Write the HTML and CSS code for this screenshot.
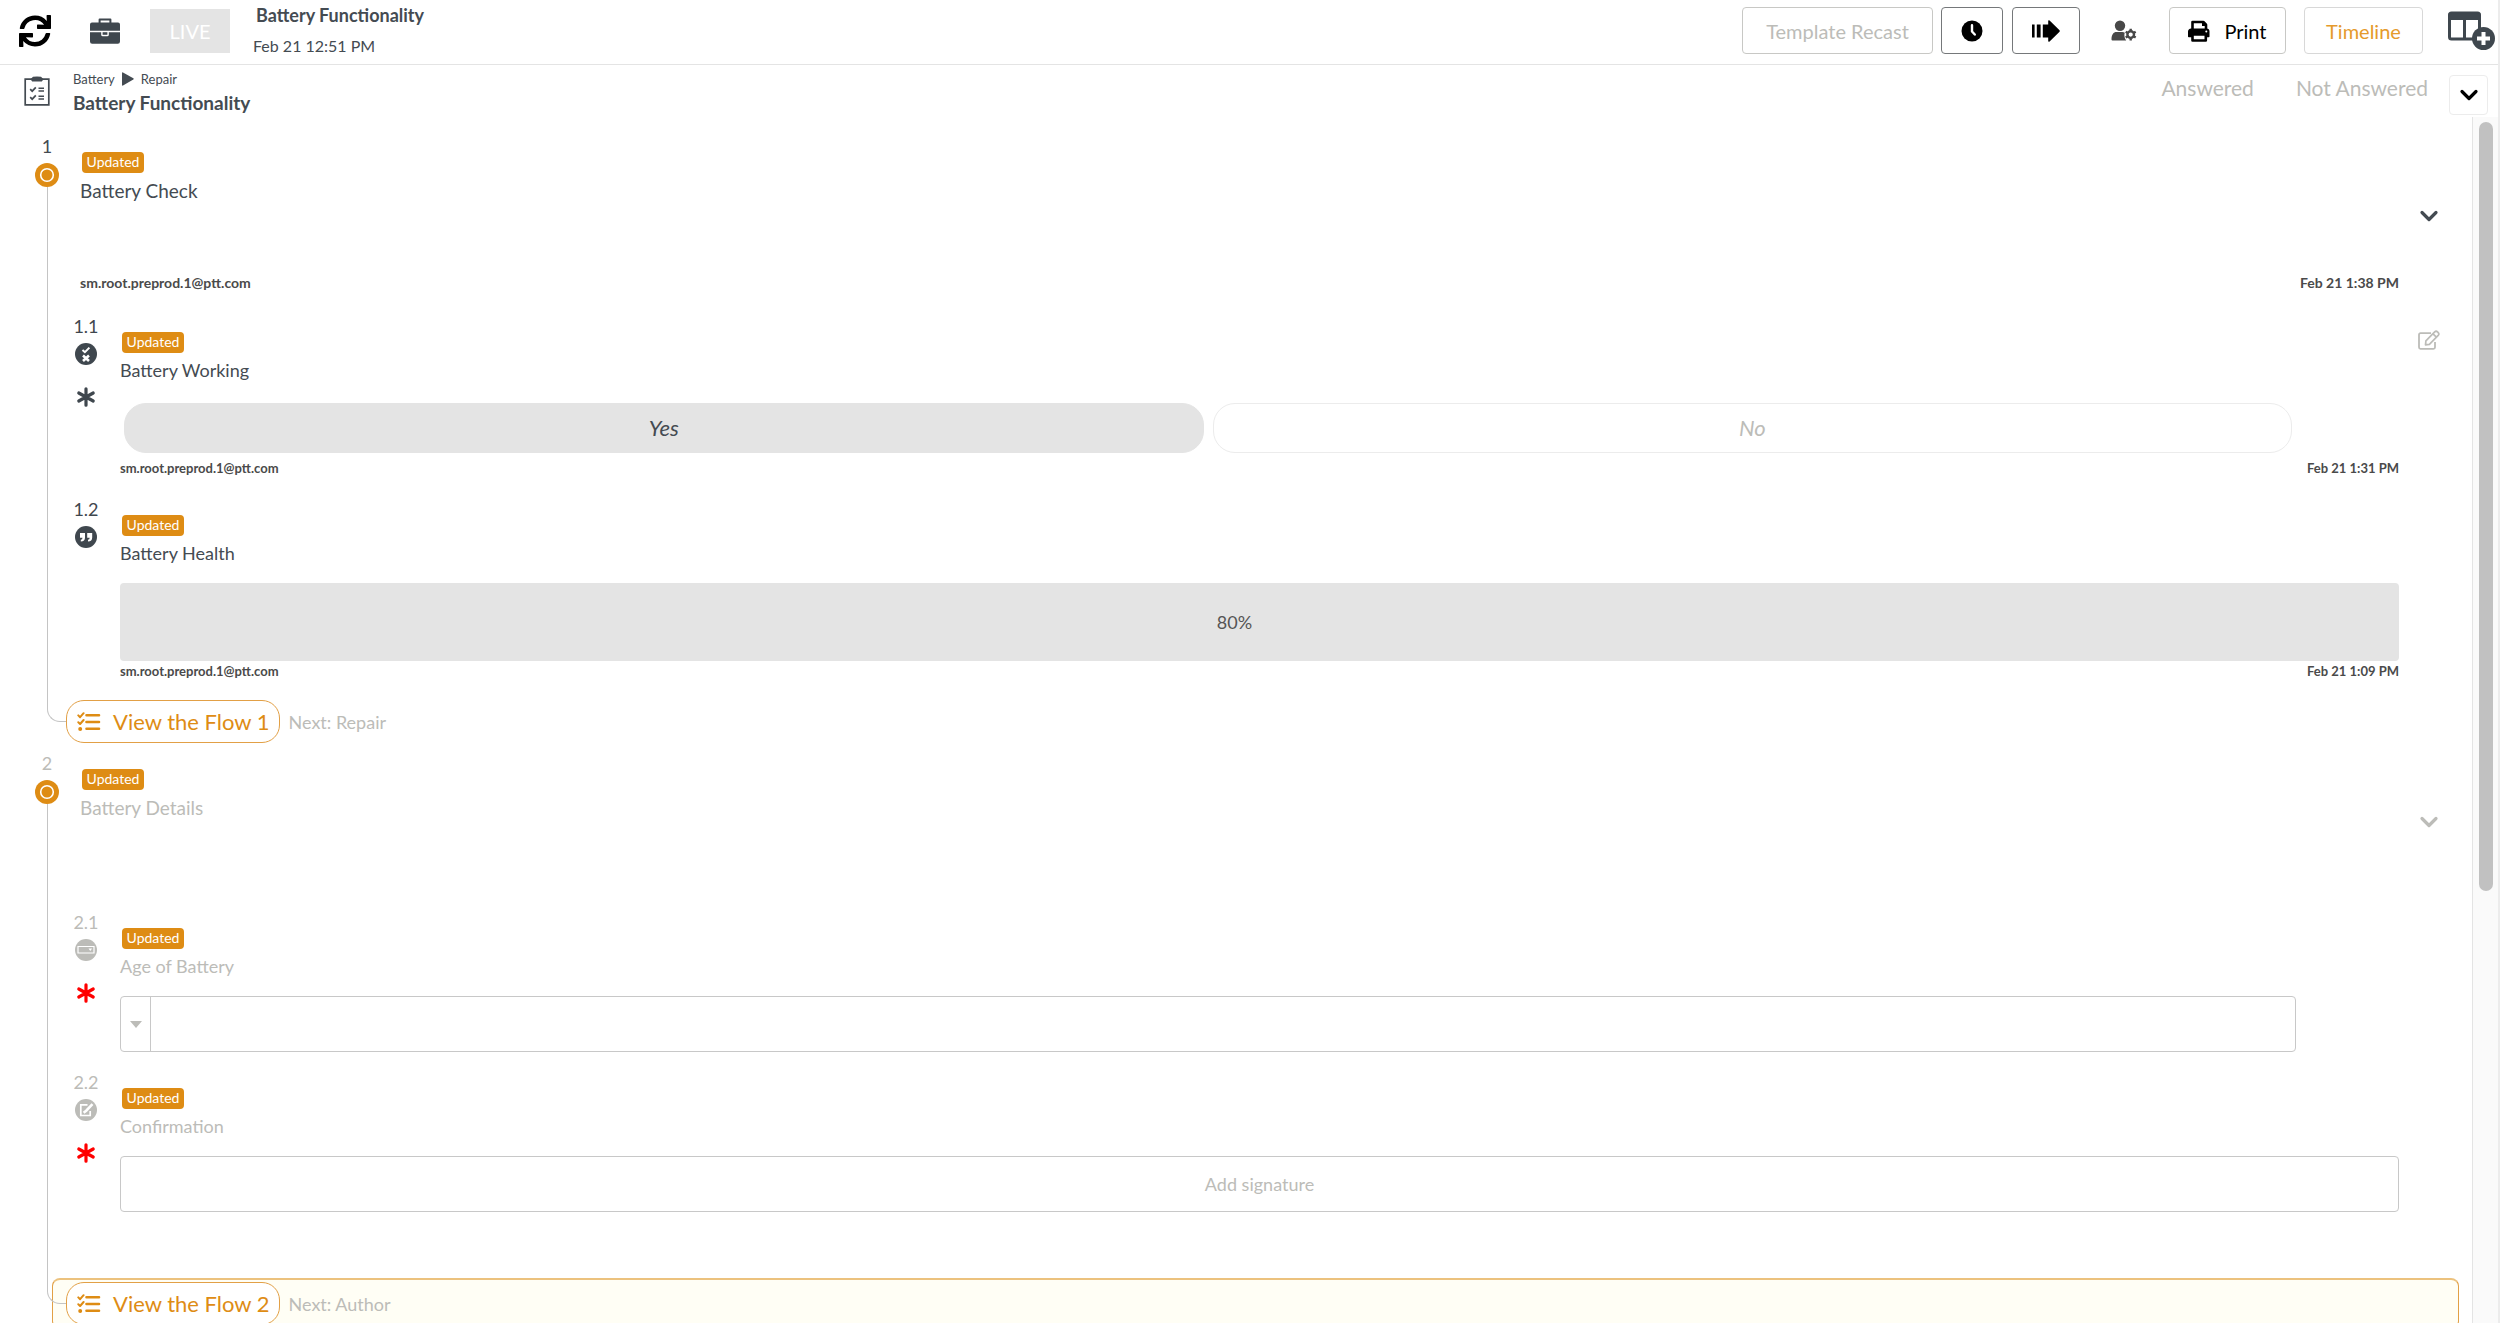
FILE: index.html
```html
<!DOCTYPE html>
<html lang="en">
<head>
    <meta charset="UTF-8">
    <meta name="viewport" content="width=device-width, initial-scale=1.0">
    <title>Battery Functionality</title>
    <link rel="stylesheet" href="styles.css">
</head>
<body>
    <!-- shared icons -->
    <svg class="sprite" aria-hidden="true">
        <symbol id="i-chevron" viewBox="0 0 20 20">
            <path d="M3 6.5l7 7 7-7" fill="none" stroke="currentColor" stroke-width="3.2" stroke-linecap="round" stroke-linejoin="round"/>
        </symbol>
        <symbol id="i-asterisk" viewBox="0 0 20 20">
            <path d="M10 1.800v16.400M2.800 6l14.400 8M17.200 6L2.800 14" fill="none" stroke="currentColor" stroke-width="3.2" stroke-linecap="round"/>
        </symbol>
        <symbol id="i-target" viewBox="0 0 24 24">
            <circle cx="12" cy="12" r="12" fill="currentColor"/>
            <circle cx="12" cy="12" r="6.3" fill="none" stroke="#fff" stroke-width="1.6"/>
        </symbol>
        <symbol id="i-flow" viewBox="0 0 24 20">
            <path d="M9.5 3.2h12.5M9.5 10h12.5M9.5 16.8h12.5" fill="none" stroke="currentColor" stroke-width="2.6" stroke-linecap="round"/>
            <path d="M1.3 3.4l1.8 1.8L6.6 1.2M1.3 10.2l1.8 1.8L6.6 8" fill="none" stroke="currentColor" stroke-width="2" stroke-linecap="round" stroke-linejoin="round"/>
            <circle cx="3.2" cy="16.9" r="2" fill="currentColor"/>
        </symbol>
    </svg>

    <header class="topbar">
        <button class="icon-btn refresh" type="button" aria-label="Refresh">
            <svg viewBox="0 0 512 512" width="32" height="32"><path fill="currentColor" d="M440.65 12.57l4 82.77A247.16 247.16 0 0 0 255.83 8C134.73 8 33.91 94.92 12.29 209.82A12 12 0 0 0 24.09 224h49.05a12 12 0 0 0 11.67-9.26 175.91 175.91 0 0 1 317-56.94l-101.46-4.86a12 12 0 0 0-12.57 12v47.41a12 12 0 0 0 12 12H500a12 12 0 0 0 12-12V12a12 12 0 0 0-12-12h-47.37a12 12 0 0 0-11.98 12.57zM255.83 432a175.61 175.61 0 0 1-146-77.8l101.8 4.87a12 12 0 0 0 12.57-12v-47.4a12 12 0 0 0-12-12H12a12 12 0 0 0-12 12V500a12 12 0 0 0 12 12h47.35a12 12 0 0 0 12-12.6l-4.15-82.57A247.17 247.17 0 0 0 255.83 504c121.11 0 221.93-86.92 243.55-201.82a12 12 0 0 0-11.8-14.18h-49.05a12 12 0 0 0-11.67 9.26A175.86 175.86 0 0 1 255.83 432z"/></svg>
        </button>
        <button class="icon-btn briefcase" type="button" aria-label="Jobs">
            <svg viewBox="0 0 30 26" width="30" height="26">
                <path d="M9.6 5V1.6h10.8V5" fill="none" stroke="currentColor" stroke-width="2" stroke-linejoin="round"/>
                <path fill="currentColor" d="M2 4.6h26a2 2 0 0 1 2 2v6.2H0V6.600a2 2 0 0 1 2-2zM0 14.200h11.200v2.600a1.500 1.500 0 0 0 1.500 1.500h4.600a1.500 1.500 0 0 0 1.500-1.500v-2.600H30v9.300a2.200 2.200 0 0 1-2.200 2.200H2.200A2.200 2.200 0 0 1 0 23.500z"/>
                <path fill="currentColor" d="M12.600 14.200h4.800v2.600h-4.800z"/>
            </svg>
        </button>
        <button class="live" type="button" disabled>LIVE</button>
        <div class="job">
            <div class="job-name">Battery Functionality</div>
            <div class="job-date">Feb 21 12:51 PM</div>
        </div>
        <div class="actions">
            <button class="btn recast" type="button" disabled>Template Recast</button>
            <button class="btn dark" type="button" aria-label="History">
                <svg viewBox="0 0 22 22" width="22" height="22"><circle cx="11" cy="11" r="10.500" fill="currentColor"/><path d="M11 5.200v6.300l2.800 3" fill="none" stroke="#fff" stroke-width="2.400" stroke-linecap="round" stroke-linejoin="round"/></svg>
            </button>
            <button class="btn dark" type="button" aria-label="Move forward">
                <svg viewBox="0 0 28 22" width="28" height="22"><path fill="currentColor" d="M0 4.500h2.600v13H0zM4.800 4.500h3.800v13H4.800zM10.800 4.500h5.400V1.200q0-1.600 1.400-.6L27.300 10q1 1 0 2l-9.700 9.400q-1.400 1-1.400-.6v-3.300h-5.400z"/></svg>
            </button>
            <button class="icon-btn user" type="button" aria-label="User settings">
                <svg viewBox="0 0 26 22" width="26" height="22">
                    <circle cx="9" cy="5.800" r="5.200" fill="currentColor"/>
                    <path fill="currentColor" d="M0.500 19.500c0-4.800 2-7.400 5-7.400h5.800c1 0 1.800.2 2.500.6-.8 1.800-.6 5 1.400 7.800H1.500a1 1 0 0 1-1-1z"/>
                    <circle cx="19.700" cy="14.600" r="3.300" fill="none" stroke="currentColor" stroke-width="2.400"/>
                    <path d="M19.700 8.800v2M19.700 18.400v2M14.700 11.700l1.700 1M23 16.500l1.700 1M14.700 17.500l1.700-1M23 12.700l1.700-1" stroke="currentColor" stroke-width="2.400"/>
                </svg>
            </button>
            <button class="btn print" type="button">
                <svg viewBox="0 0 22 22" width="22" height="22">
                    <path d="M4.500 9V2h10.800L18 4.700V9" fill="none" stroke="currentColor" stroke-width="2.600" stroke-linejoin="round"/>
                    <path fill="currentColor" d="M14 1v5h5V4.500L15.500 1zM3.500 8.500h15A3 3 0 0 1 21.500 11.500v5a.8.8 0 0 1-.8.8H.8a.8.8 0 0 1-.8-.8v-5A3 3 0 0 1 3.500 8.500z"/>
                    <path d="M4.500 14.500h13.300v6H4.500z" fill="#fff" stroke="currentColor" stroke-width="2.600" stroke-linejoin="round"/>
                    <circle cx="18.300" cy="11.600" r="1" fill="#fff"/>
                </svg>
                Print
            </button>
            <button class="btn timeline" type="button">Timeline</button>
            <button class="icon-btn columns" type="button" aria-label="Add column">
                <svg viewBox="0 0 48 40" width="48" height="40">
                    <rect x="1.500" y="2" width="30" height="26" rx="2" fill="#fff" stroke="currentColor" stroke-width="3"/>
                    <path d="M0.500 2.500h32v6.500h-32zM15 8h3v20h-3z" fill="currentColor"/>
                    <circle cx="35.500" cy="27.500" r="11.500" fill="currentColor"/>
                    <path d="M35.500 21v13M29 27.500h13" stroke="#fff" stroke-width="4"/>
                </svg>
            </button>
        </div>
    </header>

    <div class="subbar">
        <svg class="clipboard" viewBox="0 0 26 30" width="26" height="30" aria-hidden="true">
            <path d="M1.200 3.200h23.600v25.600H1.200z" fill="none" stroke="currentColor" stroke-width="1.700"/>
            <path fill="currentColor" d="M6.500 3.200L9 .8Q13 .2 17 .8l2.500 2.400-1.700 2.400H8.200z"/>
            <path d="M6.200 13.200l2 2 3.600-3.800M6.200 21.200l2 2 3.600-3.800" fill="none" stroke="currentColor" stroke-width="1.700"/>
            <path d="M14.500 12.200H20M14.500 15H20M14.500 20.200H20M14.500 23H20" stroke="currentColor" stroke-width="1.500"/>
        </svg>
        <div class="sub-title">
            <nav class="crumbs" aria-label="Breadcrumb">
                <a href="#">Battery</a>
                <svg viewBox="0 0 12 14" width="12" height="14" aria-hidden="true"><path fill="currentColor" d="M0 1.200Q0 0 1 .5l10.300 5.700q.9.700 0 1.400L1 13.500Q0 14 0 12.800z"/></svg>
                <a href="#">Repair</a>
            </nav>
            <h1>Battery Functionality</h1>
        </div>
        <div class="filters">
            <a href="#">Answered</a>
            <a href="#">Not Answered</a>
        </div>
        <button class="expand" type="button" aria-label="Expand all">
            <svg width="20" height="20"><use href="#i-chevron"/></svg>
        </button>
    </div>

    <div class="body">
        <main class="steps">
            <section class="step">
                <div class="rail">
                    <span class="num">1</span>
                    <svg class="dot" width="24" height="24" aria-hidden="true"><use href="#i-target"/></svg>
                    <div class="line"></div>
                </div>
                <div class="content">
                    <div class="head">
                        <div class="head-text">
                            <span class="badge">Updated</span>
                            <h2>Battery Check</h2>
                            <div class="sign large"><span>sm.root.preprod.1@ptt.com</span><time>Feb 21 1:38 PM</time></div>
                        </div>
                        <button class="icon-btn toggle" type="button" aria-label="Toggle Battery Check">
                            <svg width="20" height="20"><use href="#i-chevron"/></svg>
                        </button>
                    </div>

                    <div class="task">
                        <div class="marker">
                            <span class="num">1.1</span>
                            <svg viewBox="0 0 22 22" width="22" height="22" aria-hidden="true">
                                <circle cx="11" cy="11" r="11" fill="currentColor"/>
                                <path d="M7.500 7l2.400 2.200 4.500-4.600" fill="none" stroke="#fff" stroke-width="2"/>
                                <path d="M8 12.500l6 5.500M14 12.500L8 18" stroke="#fff" stroke-width="2.600"/>
                            </svg>
                            <svg class="required" width="20" height="20" aria-hidden="true"><use href="#i-asterisk"/></svg>
                        </div>
                        <div class="field">
                            <span class="badge">Updated</span>
                            <h3>Battery Working</h3>
                            <div class="choices">
                                <button class="choice selected" type="button">Yes</button>
                                <button class="choice" type="button">No</button>
                            </div>
                            <div class="sign"><span>sm.root.preprod.1@ptt.com</span><time>Feb 21 1:31 PM</time></div>
                        </div>
                        <button class="icon-btn edit" type="button" aria-label="Edit answer">
                            <svg viewBox="0 0 22 20" width="22" height="20">
                                <path d="M13 3.200H2.500A1.500 1.500 0 0 0 1 4.700v12.600a1.500 1.500 0 0 0 1.500 1.500h13a1.500 1.500 0 0 0 1.500-1.500V12" fill="none" stroke="currentColor" stroke-width="1.800"/>
                                <path d="M7.500 14.800l.4-4 8.800-8.900q1.400-1.300 2.800 0l.7.700q1.300 1.400 0 2.800l-8.800 8.900zM15 3.800l3.400 3.400" fill="none" stroke="currentColor" stroke-width="1.700" stroke-linejoin="round"/>
                            </svg>
                        </button>
                    </div>

                    <div class="task">
                        <div class="marker">
                            <span class="num">1.2</span>
                            <svg viewBox="0 0 22 22" width="22" height="22" aria-hidden="true">
                                <circle cx="11" cy="11" r="11" fill="currentColor"/>
                                <path fill="#fff" d="M5 7h5v4.500q0 4-4.200 4v-1.700q1.700 0 1.700-2H5zM12.200 7h5v4.500q0 4-4.200 4v-1.700q1.700 0 1.700-2h-2.500z"/>
                            </svg>
                        </div>
                        <div class="field">
                            <span class="badge">Updated</span>
                            <h3><label for="health">Battery Health</label></h3>
                            <input class="answer" id="health" type="text" value="80%" readonly>
                            <div class="sign"><span>sm.root.preprod.1@ptt.com</span><time>Feb 21 1:09 PM</time></div>
                        </div>
                    </div>
                </div>
                <div class="flow">
                    <button class="flow-btn" type="button"><svg width="24" height="20" aria-hidden="true"><use href="#i-flow"/></svg>View the Flow 1</button>
                    <span>Next: Repair</span>
                </div>
            </section>

            <section class="step pending">
                <div class="rail">
                    <span class="num">2</span>
                    <svg class="dot" width="24" height="24" aria-hidden="true"><use href="#i-target"/></svg>
                    <div class="line"></div>
                </div>
                <div class="content">
                    <div class="head">
                        <div class="head-text">
                            <span class="badge">Updated</span>
                            <h2>Battery Details</h2>
                        </div>
                        <button class="icon-btn toggle" type="button" aria-label="Toggle Battery Details">
                            <svg width="20" height="20"><use href="#i-chevron"/></svg>
                        </button>
                    </div>

                    <div class="task">
                        <div class="marker">
                            <span class="num">2.1</span>
                            <svg viewBox="0 0 22 22" width="22" height="22" aria-hidden="true">
                                <circle cx="11" cy="11" r="11" fill="currentColor"/>
                                <path d="M3 7.500h16v6.500H3z" fill="none" stroke="#fff" stroke-width="1.200"/>
                                <path d="M13.500 9.500h3.600l-1.800 2.600z" fill="#fff"/>
                            </svg>
                            <svg class="required" width="20" height="20" aria-hidden="true"><use href="#i-asterisk"/></svg>
                        </div>
                        <div class="field">
                            <span class="badge">Updated</span>
                            <h3><label for="age">Age of Battery</label></h3>
                            <div class="dropdown">
                                <span class="caret"></span>
                                <select id="age"><option value=""></option></select>
                            </div>
                        </div>
                    </div>

                    <div class="task">
                        <div class="marker">
                            <span class="num">2.2</span>
                            <svg viewBox="0 0 22 22" width="22" height="22" aria-hidden="true">
                                <circle cx="11" cy="11" r="11" fill="currentColor"/>
                                <path d="M12.500 5.800H5.800v10.700h9.400V12" fill="none" stroke="#fff" stroke-width="1.700"/>
                                <path d="M17.500 5.200l-6.300 6.500-2.600 2" stroke="#fff" stroke-width="2.600" fill="none"/>
                            </svg>
                            <svg class="required" width="20" height="20" aria-hidden="true"><use href="#i-asterisk"/></svg>
                        </div>
                        <div class="field">
                            <span class="badge">Updated</span>
                            <h3>Confirmation</h3>
                            <button class="signature" type="button">Add signature</button>
                        </div>
                    </div>
                </div>
                <div class="flow current">
                    <button class="flow-btn" type="button"><svg width="24" height="20" aria-hidden="true"><use href="#i-flow"/></svg>View the Flow 2</button>
                    <span>Next: Author</span>
                </div>
            </section>
        </main>
        <div class="scrollbar"><div class="thumb"></div></div>
    </div>
</body>
</html>
```
FILE: styles.css
```css
* {
    box-sizing: border-box;
}
body {
    margin: 0;
    height: 100vh;
    overflow: hidden;
    display: flex;
    flex-direction: column;
    background: #fff;
    border-right: 2px solid #ececec;
    color: #444b52;
    font-family: Lato, "Open Sans", sans-serif;
    font-size: 18px;
    line-height: 24px;
}
h1, h2, h3 {
    margin: 0;
    font-size: 18px;
    font-weight: 400;
}
a {
    color: inherit;
    text-decoration: none;
}
button, input, select {
    font: inherit;
    color: inherit;
}
button {
    cursor: pointer;
}
svg {
    display: block;
    flex: none;
}
.sprite {
    position: absolute;
    width: 0;
    height: 0;
}
.icon-btn {
    display: flex;
    align-items: center;
    justify-content: center;
    padding: 0;
    border: none;
    background: none;
}

/* top bar */
.topbar {
    display: flex;
    align-items: center;
    height: 65px;
    flex: none;
    padding: 0 2px 3px 19px;
    border-bottom: 1px solid #e4e4e4;
}
.refresh {
    color: #000;
}
.briefcase {
    margin: 0 30px 0 39px;
    color: #3f474e;
}
.live {
    width: 80px;
    height: 44px;
    padding: 0;
    border: none;
    background: #e4e4e4;
    color: #fff;
    font-size: 20px;
}
.job {
    margin-left: 23px;
}
.job-name {
    padding-left: 3px;
    margin-bottom: 7px;
    font-weight: 700;
}
.job-date {
    font-size: 16px;
}
.actions {
    display: flex;
    align-items: center;
    margin-left: auto;
}
.btn {
    display: flex;
    align-items: center;
    justify-content: center;
    gap: 14px;
    height: 47px;
    padding: 0 19px;
    border: 1px solid #c8c8c5;
    border-radius: 4px;
    background: #fff;
    color: #000;
    font-size: 20px;
}
.recast {
    color: #bcbcb8;
    width: 191px;
    margin-right: 8px;
}
.dark {
    border-color: #75787a;
    margin-right: 9px;
}
.user {
    margin: 0 32px 0 22px;
    color: #484848;
}
.print {
    width: 117px;
}
.timeline {
    width: 119px;
    margin: 0 25px 0 18px;
    border-color: #d8d8d8;
    color: #e59a2c;
}
.columns {
    color: #3f474e;
}

/* sub header */
.subbar {
    display: flex;
    height: 52px;
    flex: none;
    padding: 0 10px 0 24px;
}
.clipboard {
    margin-top: 11px;
}
.sub-title {
    margin: 6px 0 0 23px;
}
.crumbs {
    display: flex;
    align-items: center;
    gap: 7px;
    font-size: 13px;
    line-height: 16px;
}
.sub-title h1 {
    margin-top: 4px;
    font-size: 19px;
    font-weight: 700;
}
.filters {
    display: flex;
    gap: 42px;
    margin: 11px 21px 0 auto;
    color: #bcbcb8;
    font-size: 21px;
}
.expand {
    display: flex;
    align-items: center;
    justify-content: center;
    width: 39px;
    height: 40px;
    margin-top: 10px;
    padding: 0;
    border: 1px solid #ececec;
    border-radius: 4px;
    background: #fff;
    color: #000;
}

/* scrolling area */
.body {
    display: flex;
    flex: 1;
    min-height: 0;
}
.steps {
    flex: 1;
    overflow: hidden;
    padding: 17px 13px 0 0;
}
.scrollbar {
    width: 26px;
    padding: 5px 5px 0 6px;
    border-left: 1px solid #e4e4e4;
    background: #fafafa;
}
.thumb {
    height: 64%;
    border-radius: 7px;
    background: #c1c1c1;
}

/* steps */
.step {
    display: grid;
    grid-template-columns: 66px 1fr;
    margin-bottom: 8px;
}
.rail {
    grid-row: 1 / 3;
    display: flex;
    flex-direction: column;
    margin-bottom: 21px;
    z-index: 1;
}
.num {
    text-align: center;
}
.rail .num {
    width: 24px;
    margin-left: 35px;
}
.dot {
    margin: 5px 0 0 35px;
    color: #de8c14;
}
.line {
    flex: 1;
    margin-left: 47px;
    border-left: 1px solid #c4c4c4;
    border-bottom: 1px solid #c4c4c4;
    border-bottom-left-radius: 13px;
}
.head {
    display: flex;
    align-items: center;
    min-height: 118px;
    margin: 18px 0 23px 14px;
}
.head-text {
    flex: 1;
    align-self: flex-start;
}
.badge {
    display: block;
    width: 62px;
    height: 21px;
    margin-left: 2px;
    border-radius: 4px;
    background: #de8c14;
    color: #fff;
    font-size: 14px;
    line-height: 20px;
    text-align: center;
}
h2 {
    margin-top: 6px;
    font-size: 19px;
}
h3 {
    margin-top: 5px;
}
.toggle {
    width: 60px;
    padding-bottom: 12px;
}
.sign {
    display: flex;
    justify-content: space-between;
    margin: 2px 0 3px;
    color: #4a4a4a;
    font-size: 13px;
    font-weight: 700;
    line-height: 16px;
}
.sign.large {
    margin: 72px 0 0;
    font-size: 14px;
}
.task {
    display: grid;
    grid-template-columns: 40px 1fr 60px;
    column-gap: 14px;
    margin-bottom: 18px;
}
.task .field {
    margin-right: -14px;
    padding-top: 18px;
}
.marker {
    display: flex;
    flex-direction: column;
    align-items: center;
    gap: 5px;
    color: #3f474e;
}
.required {
    margin-top: 17px;
}
.edit {
    align-self: start;
    margin-top: 16px;
    color: #bcbcb8;
}
.choices {
    display: flex;
    gap: 9px;
    margin: 18px 103px 0 0;
    padding: 3px 4px 5px;
}
.choice {
    flex: 1;
    height: 50px;
    border: 1px solid #ececec;
    border-radius: 22px;
    background: #fff;
    color: #bcbcb8;
    font-size: 22px;
    font-style: italic;
}
.choice.selected {
    border-color: #e4e4e4;
    background: #e4e4e4;
    color: #444b52;
}
.answer {
    display: block;
    width: 100%;
    height: 78px;
    margin-top: 18px;
    padding: 0 50px 0 0;
    border: none;
    border-radius: 4px;
    background: #e4e4e4;
    color: #555;
    text-align: center;
}
.dropdown {
    display: flex;
    height: 56px;
    margin: 18px 103px 0 0;
    border: 1px solid #c8c8c8;
    border-radius: 4px;
}
.caret {
    display: flex;
    align-items: center;
    justify-content: center;
    width: 30px;
    border-right: 1px solid #c8c8c8;
}
.caret::after {
    content: '';
    border: 6px solid transparent;
    border-top: 7px solid #bcbcb8;
    border-bottom: none;
}
.dropdown select {
    flex: 1;
    appearance: none;
    border: none;
    background: none;
}
.signature {
    display: block;
    width: 100%;
    height: 56px;
    margin-top: 18px;
    border: 1px solid #c8c8c8;
    border-radius: 4px;
    background: #fff;
    color: #bcbcb8;
}

/* flow footer */
.flow {
    grid-column: 2;
    display: flex;
    align-items: center;
    gap: 9px;
    color: #bcbcb8;
}
.flow-btn {
    display: flex;
    align-items: center;
    gap: 12px;
    height: 43px;
    padding: 0 9px 0 10px;
    border: 1px solid #e2a046;
    border-radius: 18px;
    background: #fff;
    color: #de8c14;
    font-size: 22px;
}
.flow.current {
    margin: 48px 0 0 -14px;
    padding: 2px 0 2px 13px;
    border: 1px solid #e2a046;
    border-top: 2px solid #ecc27e;
    border-bottom-width: 2px;
    border-radius: 8px;
    background: #fffef5;
}

/* steps that are not reached yet */
.pending .num,
.pending .marker,
.pending h2,
.pending h3,
.pending .toggle {
    color: #bcbcb8;
}
.pending .required {
    color: #f00;
}
.pending .rail {
    margin-bottom: 25px;
}
```
